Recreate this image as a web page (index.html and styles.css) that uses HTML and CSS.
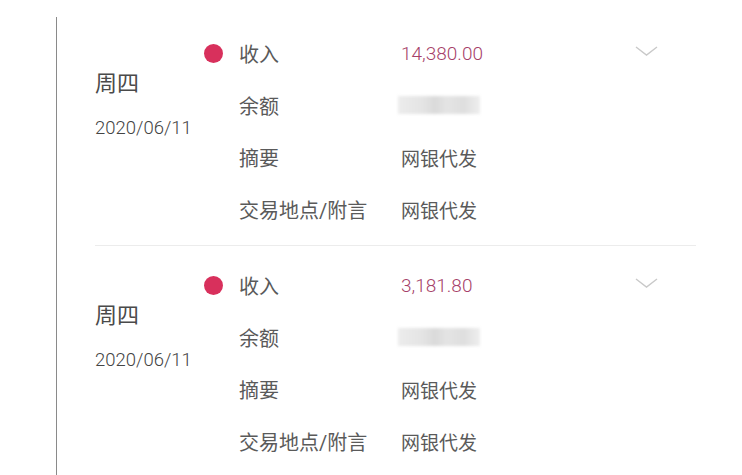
FILE: index.html
```html
<!DOCTYPE HTML>
<html>
    <head>
        <title>交易明细</title>
        <link rel="stylesheet" href="styles.css">
    </head>

    <body>
        <div class="timeline">
            <div class="entry">
                <div class="day">
                    <div class="week">周四</div>
                    <div class="date">2020/06/11</div>
                </div>
                <div class="dotcol"><span class="dot"></span></div>
                <div class="rows">
                    <div class="row">
                        <span class="label">收入</span>
                        <span class="value amount">14,380.00</span>
                        <svg class="chev" width="23" height="10" viewBox="0 0 23 10"><polyline points="1,1 11.5,9 22,1" fill="none" stroke="#c9c9c9" stroke-width="1.4"/></svg>
                    </div>
                    <div class="row">
                        <span class="label">余额</span>
                        <span class="value"><span class="blur"></span></span>
                    </div>
                    <div class="row">
                        <span class="label">摘要</span>
                        <span class="value">网银代发</span>
                    </div>
                    <div class="row">
                        <span class="label">交易地点/附言</span>
                        <span class="value">网银代发</span>
                    </div>
                </div>
            </div>

            <div class="entry">
                <div class="day">
                    <div class="week">周四</div>
                    <div class="date">2020/06/11</div>
                </div>
                <div class="dotcol"><span class="dot"></span></div>
                <div class="rows">
                    <div class="row">
                        <span class="label">收入</span>
                        <span class="value amount">3,181.80</span>
                        <svg class="chev" width="23" height="10" viewBox="0 0 23 10"><polyline points="1,1 11.5,9 22,1" fill="none" stroke="#c9c9c9" stroke-width="1.4"/></svg>
                    </div>
                    <div class="row">
                        <span class="label">余额</span>
                        <span class="value"><span class="blur"></span></span>
                    </div>
                    <div class="row">
                        <span class="label">摘要</span>
                        <span class="value">网银代发</span>
                    </div>
                    <div class="row">
                        <span class="label">交易地点/附言</span>
                        <span class="value">网银代发</span>
                    </div>
                </div>
            </div>
        </div>
    </body>
</html>
```

FILE: styles.css
```css
body {
    margin: 0;
    background: white;
    font-family: Roboto, "Noto Sans CJK SC", sans-serif;
    color: #5a5a5a;
    height: 475px;
    overflow: hidden;
}
.timeline {
    margin: 17px 0 0 56px;
    border-left: 1px solid #8a8a8a;
    height: 458px;
    overflow: hidden;
}
.entry {
    display: flex;
    margin: 0 46px 0 38px;
    padding: 13px 0 10px;
    border-bottom: 1px solid #ececec;
}
.entry:first-child {
    padding-top: 10px;
}
.day {
    width: 109px;
    padding-top: 42px;
}
.week {
    font-size: 22px;
    line-height: 30px;
    color: #4a4a4a;
}
.date {
    margin-top: 17px;
    font-size: 18.5px;
    line-height: 24px;
    font-weight: 300;
    color: #444;
}
.dotcol {
    width: 35px;
    padding-top: 17px;
}
.dot {
    display: block;
    width: 19px;
    height: 19px;
    border-radius: 50%;
    background: #d8305c;
}
.rows {
    flex: 1;
}
.row {
    display: flex;
    align-items: center;
    height: 52px;
}
.label {
    width: 162px;
    font-size: 20px;
    color: #5a5a5a;
}
.value {
    flex: 1;
    font-size: 19px;
    color: #5a5a5a;
}
.amount {
    font-size: 19px;
    font-weight: 300;
    color: #a63f69;
}
.chev {
    margin-right: 38px;
    margin-top: -4px;
}
.blur {
    display: block;
    width: 82px;
    height: 18px;
    margin-left: -3px;
    background: linear-gradient(90deg, #ececec 0, #e4e4e4 30%, #dadada 45%, #e4e4e4 60%, #dedede 80%, #eeeeee 100%);
    filter: blur(1.5px);
}
```
